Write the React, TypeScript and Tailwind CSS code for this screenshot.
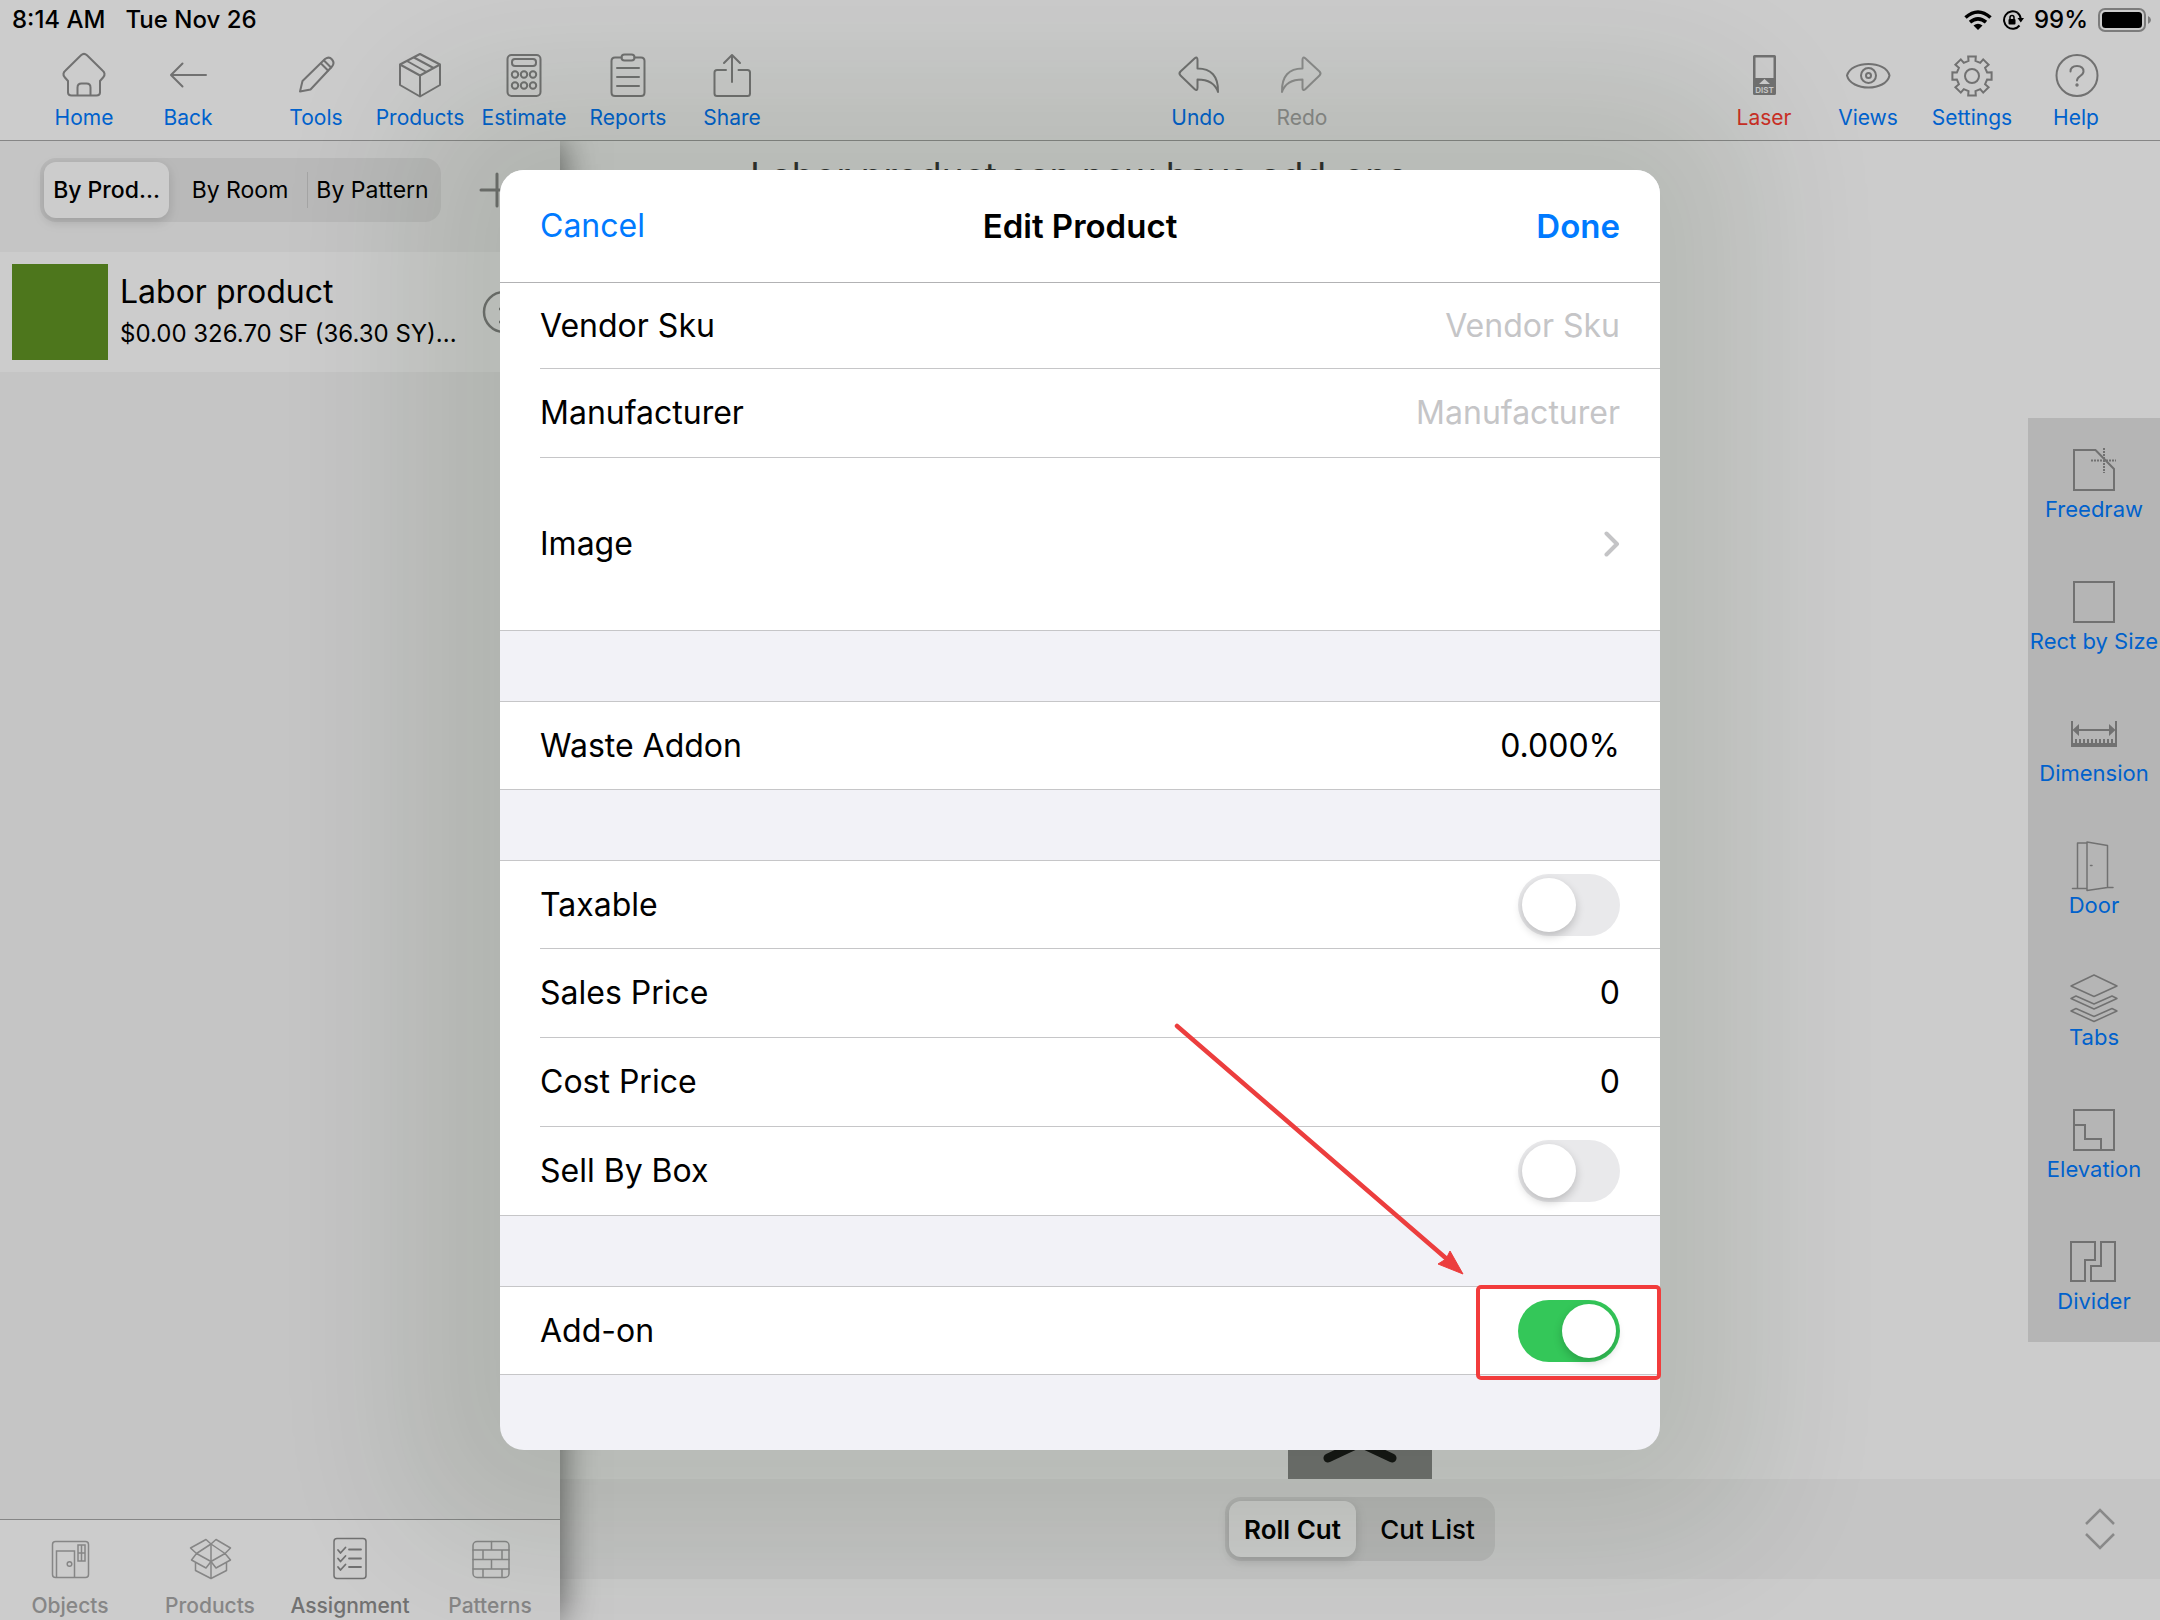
import type { ReactNode } from 'react'

// cog outline with eight square teeth, drawn around 24,24
const gearPath = (() => {
  const points: string[] = []
  for (let i = 0; i < 8; i++) {
    const steps: [number, number][] = [[15.5, -13], [20, -11], [20, 11], [15.5, 13]]
    steps.forEach(([r, offset]) => {
      const a = ((i * 45 + offset) * Math.PI) / 180
      points.push(`${(24 + r * Math.sin(a)).toFixed(1)} ${(24 - r * Math.cos(a)).toFixed(1)}`)
    })
  }
  return `M${points.join('L')}Z`
})()

function Icon({ children, className = '' }: { children: ReactNode; className?: string }) {
  return (
    <svg
      viewBox="0 0 48 48"
      className={`h-12 w-12 overflow-visible ${className}`}
      fill="none"
      stroke="currentColor"
      strokeWidth="2"
      strokeLinejoin="round"
      strokeLinecap="round"
      aria-hidden="true"
    >
      {children}
    </svg>
  )
}

const undoPath =
  'M20.5 6.5Q23.5 4 23.5 8V16.5C37 16.5 44.5 24 44 40C41 31 33 27.5 23.5 27.5V35.5Q23.5 39.5 20.5 37L6.5 23.5Q4.5 21.5 6.5 19.5Z'

const icons = {
  home: (
    <Icon>
      <path d="M21 3.2Q24 .6 27 3.2L42.5 18.5Q46 21.5 43.5 25L40 29V40.5Q40 43.5 36.5 43.5H11.5Q8 43.5 8 40.5V29L4.5 25Q2 21.5 5.5 18.5Z" />
      <path d="M17.5 43V35.5Q17.5 31.5 21.5 31.5H26.5Q30.5 31.5 30.5 35.5V43" />
    </Icon>
  ),
  back: (
    <Icon>
      <path d="M18.5 11.5L7 23l11.5 11.5M8 23H42" />
    </Icon>
  ),
  pencil: (
    <Icon>
      <path d="M8 39.5L10.5 29L33 7Q37 4 40 7.5Q43 11 40 14.5L18.5 37.5Z" />
      <path d="M32 8.5L39 15.5M29 11.5L36 18.5" />
    </Icon>
  ),
  box: (
    <Icon>
      <path d="M24 2L44 12.5V33L24 44.5L4 33V12.5ZM4 12.5L24 23.5L44 12.5M24 23.5V44.5M18 5.5L37.5 16M11 9L30.5 20" />
    </Icon>
  ),
  calculator: (
    <Icon>
      <rect x="7.5" y="3" width="33" height="41" rx="4" />
      <rect x="12" y="7" width="24" height="7" rx="3" />
      {[15, 24, 33].map((x) => (
        <g key={x}>
          <circle cx={x} cy="22.5" r="3.2" />
          <circle cx={x} cy="33.5" r="3.2" />
        </g>
      ))}
    </Icon>
  ),
  clipboard: (
    <Icon>
      <path d="M17.5 5.5H11Q7.5 5.5 7.5 9V40.5Q7.5 44 11 44H37Q40.5 44 40.5 40.5V9Q40.5 5.5 37 5.5H30.5" />
      <rect x="17.5" y="2.5" width="13" height="6" rx="3" />
      <path d="M13 16H35M13 25H35M13 34H35" />
    </Icon>
  ),
  share: (
    <Icon>
      <path d="M18 18H9Q6.5 18 6.5 20.5V41.5Q6.5 44 9 44H39.5Q42 44 42 41.5V20.5Q42 18 39.5 18H30.5M24 30V3M16 11L24 3L32 11" />
    </Icon>
  ),
  undo: (
    <Icon>
      <path d={undoPath} />
    </Icon>
  ),
  redo: (
    <Icon className="-scale-x-100">
      <path d={undoPath} />
    </Icon>
  ),
  laser: (
    <Icon>
      <path fill="currentColor" stroke="none" fillRule="evenodd" d="M14.5 3H34.5Q36 3 36 4.5V41.5Q36 43 34.5 43H14.5Q13 43 13 41.5V4.5Q13 3 14.5 3ZM15.5 5.5V26H33.5V5.5ZM24.5 27L19 32H30Z" />
      <text x="24.5" y="40.5" textAnchor="middle" stroke="none" className="fill-white text-[8px] font-semibold">DIST</text>
    </Icon>
  ),
  eye: (
    <Icon>
      <path d="M3 23.5C7 8 42 8 45.5 23.5C42 39.5 7 39.5 3 23.5Z" />
      <circle cx="24.5" cy="23.5" r="7.5" />
      <circle cx="24.5" cy="23.5" r="2.5" />
    </Icon>
  ),
  gear: (
    <Icon>
      <path d={gearPath} strokeLinejoin="miter" />
      <circle cx="24" cy="24" r="7" />
    </Icon>
  ),
  help: (
    <Icon>
      <circle cx="25" cy="23.5" r="20.5" />
      <path d="M18.5 19.5Q18.5 14 25 14T31.5 19.5C31.5 24 25 24 25 28.5" />
      <circle cx="25" cy="33" r=".7" fill="currentColor" />
    </Icon>
  ),
  freedraw: (
    <Icon>
      <path strokeLinejoin="miter" d="M4 4H25.5L44 23V44H4Z" />
      <path strokeLinecap="butt" strokeDasharray="2 1" d="M34 2V27M21 14.5H46" />
    </Icon>
  ),
  rect: (
    <Icon>
      <path strokeLinejoin="miter" d="M4 4H44V44H4Z" />
    </Icon>
  ),
  dimension: (
    <Icon>
      <path strokeLinecap="butt" d="M2 11V37M46 11V37M4 20H44" />
      <path strokeLinecap="butt" strokeWidth="4" d="M2 35H46" />
      <path strokeLinecap="butt" strokeWidth="4" strokeDasharray="2 2" d="M5 31H43" />
      <path fill="currentColor" stroke="none" d="M2.5 20L9 14V26ZM45.5 20L39 14V26Z" />
    </Icon>
  ),
  door: (
    <Icon>
      <path strokeWidth="1.5" d="M17 1H7.5V46M2.5 46.5H17M17 0L37.5 3.5V45.5L17 48.5ZM37.5 45.5H43M20.5 23.5H22" />
    </Icon>
  ),
  layers: (
    <Icon>
      <path strokeWidth="1.5" d="M24 1L47 12L24 22.5L1 12ZM6 22L1 24.5L24 35L47 24.5L42 22L24 30ZM6 34.5L1 37L24 47.5L47 37L42 34.5L24 42.5Z" />
    </Icon>
  ),
  elevation: (
    <Icon>
      <path strokeLinejoin="miter" d="M4 4H44V44H4ZM4 19H15V33H31V44" />
    </Icon>
  ),
  divider: (
    <Icon>
      <path strokeLinejoin="miter" d="M1 4H25V22H15V43H1ZM31 4H45V43H21V28H31Z" />
    </Icon>
  ),
  objects: (
    <Icon>
      <g strokeWidth="1.5">
        <rect x="6.5" y="5.5" width="36" height="36" rx="3" />
        <path strokeLinejoin="miter" d="M10.5 41V15H28.5V41M32 9H39V25H32ZM35.5 9V25M32 17H39" />
        <circle cx="23.5" cy="28" r="2.3" />
      </g>
    </Icon>
  ),
  openBox: (
    <Icon>
      <g strokeWidth="1.5">
        <path d="M25 8L20 3.5L4.5 12L10.5 17.5ZM25 8L30 3.5L44.5 12L39 17.5ZM10.5 17.5L5.5 24L20 32L25 25.5ZM39 17.5L44.5 24L30 32L25 25.5Z" />
        <path d="M25 8V42.5M9.5 27V34.5L25 42.5L40.5 34.5V27" />
      </g>
    </Icon>
  ),
  checklist: (
    <Icon>
      <rect x="8" y="2.5" width="32" height="40" rx="3" strokeWidth="1.5" />
      <path strokeWidth="1.8" d="M12 14L14.5 17L19.5 11.5M12 22.5L14.5 25.5L19.5 20M12 31L14.5 34L19.5 28.5M23 13.5H35M23 22.5H35M23 31H35" />
    </Icon>
  ),
  bricks: (
    <Icon>
      <g strokeWidth="1.5">
        <rect x="7" y="5.5" width="36" height="36" rx="4" />
        <path d="M7 14H43M7 23.5H43M7 33H43M25.5 5.5V14M17 14V23.5M36 14V23.5M25.5 23.5V33M17 33V41M36 33V41" />
      </g>
    </Icon>
  ),
}

type IconName = keyof typeof icons

function ToolButton({ icon, label, color = 'text-[#007aff]', iconColor = 'text-[#8e8e8e]' }: {
  icon: IconName
  label: string
  color?: string
  iconColor?: string
}) {
  return (
    <button className={`flex w-[104px] flex-col items-center gap-1 whitespace-nowrap ${color}`}>
      <span className={iconColor}>{icons[icon]}</span>
      <span className="text-[21px] leading-7">{label}</span>
    </button>
  )
}

function StatusBar() {
  return (
    <div className="flex h-10 items-center justify-between pr-2 pl-3 text-[24px] font-medium">
      <div className="flex gap-5">
        <span>8:14 AM</span>
        <span>Tue Nov 26</span>
      </div>
      <div className="flex items-center gap-[10px]">
        <svg viewBox="0 0 28 20" className="h-5 w-7" fill="none" stroke="#000" strokeWidth="3.6" aria-hidden="true">
          <path d="M1.5 7.5Q14 -3.5 26.5 7.5M6 12.2Q14 5.5 22 12.2" />
          <path d="M9.5 15.5Q14 12 18.5 15.5L14 20Z" fill="#000" stroke="none" />
        </svg>
        <svg viewBox="0 0 22 20" className="h-5 w-[22px]" fill="none" stroke="#000" strokeWidth="2" aria-hidden="true">
          <path d="M15.5 2.7A8.7 8.7 0 1 0 17.5 15.5M15.5 2.7A8.7 8.7 0 0 1 18.7 9" />
          <path d="M15.5 8H22L18.8 12.5Z" fill="#000" stroke="none" />
          <rect x="6.5" y="9" width="7" height="5.5" rx="1" fill="#000" stroke="none" />
          <path d="M8 9.5V7.5Q8 5.5 10 5.5T12 7.5V9.5" strokeWidth="1.5" />
        </svg>
        <span>99%</span>
        <svg viewBox="0 0 54 24" className="h-6 w-[54px]" aria-hidden="true">
          <rect x="1" y="1" width="46" height="22" rx="6" fill="none" stroke="#9c9c9c" strokeWidth="2" />
          <rect x="4" y="4" width="40" height="16" rx="3.5" />
          <path d="M50 8Q53 9.5 53 12T50 16Z" fill="#9c9c9c" />
        </svg>
      </div>
    </div>
  )
}

function Toolbar() {
  return (
    <nav className="flex items-start justify-between border-b border-[#a8a8a8] px-8 pt-3 pb-2">
      <div className="flex pr-1">
        <ToolButton icon="home" label="Home" />
        <ToolButton icon="back" label="Back" />
        <div className="w-6" />
        <ToolButton icon="pencil" label="Tools" />
        <ToolButton icon="box" label="Products" />
        <ToolButton icon="calculator" label="Estimate" />
        <ToolButton icon="clipboard" label="Reports" />
        <ToolButton icon="share" label="Share" />
      </div>
      <div className="flex">
        <ToolButton icon="undo" label="Undo" />
        <ToolButton icon="redo" label="Redo" color="text-[#adadad]" iconColor="text-[#b0b0b0]" />
      </div>
      <div className="flex">
        <ToolButton icon="laser" label="Laser" color="text-[#ff3b30]" />
        <ToolButton icon="eye" label="Views" />
        <ToolButton icon="gear" label="Settings" />
        <ToolButton icon="help" label="Help" />
      </div>
    </nav>
  )
}

function BottomTab({ icon, label, active = false }: { icon: IconName; label: string; active?: boolean }) {
  return (
    <button
      className={`flex w-[140px] flex-col items-center gap-2 pt-4 ${active ? 'text-[#8e8e8e]' : 'text-[#a8a8a8]'}`}
    >
      {icons[icon]}
      <span className="text-[21px] leading-7 font-medium">{label}</span>
    </button>
  )
}

function Sidebar() {
  return (
    <aside className="z-10 flex w-[560px] shrink-0 flex-col bg-[#f7f7f7] shadow-[0_0_36px_rgba(0,0,0,0.6)] [clip-path:inset(0_-60px_0_0)]">
      <div className="flex items-center gap-[38px] px-10 py-[17px]">
        <div className="flex h-16 w-[401px] items-center rounded-2xl bg-[#e8e8e8] p-1 text-[23px] whitespace-nowrap">
          <button className="h-14 w-[125px] rounded-xl bg-white font-medium shadow-[0_4px_12px_rgba(0,0,0,0.15)]">By Prod...</button>
          <button className="w-[138px] pl-1">By Room</button>
          <div className="h-9 w-px bg-[#cfcfcf]" />
          <button className="flex-1">By Pattern</button>
        </div>
        <button aria-label="Add">
          <svg viewBox="0 0 36 36" className="h-9 w-9 shrink-0" stroke="#8e8e8e" strokeWidth="3" strokeLinecap="round" aria-hidden="true">
            <path d="M2 18H34M18 2V34" />
          </svg>
        </button>
      </div>
      <div className="mt-[13px] flex h-[120px] items-center gap-3 bg-white pl-3">
        <div className="h-24 w-24 bg-[#619424]" />
        <div className="w-[350px] whitespace-nowrap">
          <div className="text-[32px] leading-[44px]">Labor product</div>
          <div className="text-[24px] leading-10">$0.00 326.70 SF (36.30 SY)...</div>
        </div>
        <button aria-label="Details">
          <svg viewBox="0 0 44 44" className="h-11 w-11" fill="none" stroke="#8e8e8e" strokeWidth="2.5" aria-hidden="true">
            <circle cx="22" cy="22" r="20" />
            <path d="M17 19H27M17 32H27" />
          </svg>
        </button>
      </div>
      <div className="flex-1" />
      <nav className="flex h-[101px] border-t border-[#a8a8a8] bg-white">
        <BottomTab icon="objects" label="Objects" />
        <BottomTab icon="openBox" label="Products" />
        <BottomTab icon="checklist" label="Assignment" active />
        <BottomTab icon="bricks" label="Patterns" />
      </nav>
    </aside>
  )
}

const drawTools: { icon: IconName; label: string }[] = [
  { icon: 'freedraw', label: 'Freedraw' },
  { icon: 'rect', label: 'Rect by Size' },
  { icon: 'dimension', label: 'Dimension' },
  { icon: 'door', label: 'Door' },
  { icon: 'layers', label: 'Tabs' },
  { icon: 'elevation', label: 'Elevation' },
  { icon: 'divider', label: 'Divider' },
]

function Workspace() {
  return (
    <main className="flex flex-1 flex-col">
      <div className="flex flex-1">
        <div className="flex flex-1 flex-col justify-between pl-[132px]">
          <h2 className="px-[58px] text-[37px] leading-[70px] text-[#3b3b3b]">Labor product can now have add-ons</h2>
          <button className="flex h-16 w-36 items-center justify-center self-center bg-[#8e8e8e]" aria-label="Expand">
            <svg viewBox="0 0 80 32" className="h-8 w-20" fill="none" stroke="#1a1a1a" strokeWidth="9" strokeLinecap="round" strokeLinejoin="round" aria-hidden="true">
              <path d="M8 27L40 12L72 27" />
            </svg>
          </button>
        </div>
        <div className="mt-[277px] flex w-[132px] flex-col self-start bg-[#e3e3e3]">
          {drawTools.map((tool) => (
            <button key={tool.label} className="flex h-[132px] flex-col items-center gap-px pt-7 whitespace-nowrap text-[#007aff]">
              <span className="text-[#8e8e8e]">{icons[tool.icon]}</span>
              <span className="text-[22px] leading-7">{tool.label}</span>
            </button>
          ))}
        </div>
      </div>
      <div className="mb-[41px] grid h-[100px] grid-cols-3 items-center bg-[#f7f7f7]">
        <div />
        <div className="flex h-16 w-[270px] items-center justify-self-center rounded-2xl bg-[#e4e4e4] p-1 text-[26px] font-medium whitespace-nowrap">
          <button className="h-14 w-[127px] rounded-xl bg-white font-semibold shadow-[0_4px_12px_rgba(0,0,0,0.15)]">Roll Cut</button>
          <button className="flex-1 pl-2">Cut List</button>
        </div>
        <button className="mr-[44px] justify-self-end" aria-label="Resize">
          <svg viewBox="0 0 32 44" className="h-11 w-8" fill="none" stroke="#acacac" strokeWidth="2.5" aria-hidden="true">
            <path d="M2 17L16 3L30 17M2 27L16 41L30 27" />
          </svg>
        </button>
      </div>
    </main>
  )
}

function Row({ label, htmlFor, children }: { label: string; htmlFor: string; children: ReactNode }) {
  return (
    <div className="relative flex h-[89px] items-center bg-white pl-10">
      <div className="flex h-full flex-1 items-center justify-between border-b border-[#c6c6c8] pr-10">
        <label htmlFor={htmlFor}>{label}</label>
        {children}
      </div>
    </div>
  )
}

function Toggle({ id, on = false }: { id: string; on?: boolean }) {
  return (
    <input
      id={id}
      type="checkbox"
      role="switch"
      defaultChecked={on}
      className="h-[62px] w-[102px] appearance-none rounded-full bg-[#e9e9eb] p-1 before:block before:h-[54px] before:w-[54px] before:rounded-full before:bg-white before:shadow-[0_4px_10px_rgba(0,0,0,0.2)] checked:bg-[#34c759] checked:before:translate-x-10"
    />
  )
}

function Section({ children }: { children: ReactNode }) {
  return <section className="mt-[70px] border-t border-[#c6c6c8] [&>div:first-child]:h-[88px] [&>div:last-child]:pl-0 [&>div:last-child>div]:pl-10">{children}</section>
}

const inputClass = 'w-[400px] bg-transparent text-right placeholder:text-[#c5c5c7] placeholder:opacity-100'

function EditProduct() {
  return (
    <form className="relative w-[1160px] rounded-[24px] bg-[#f2f2f7] pb-[75px] text-[32px] leading-10 shadow-[0_0_140px_90px_rgba(20,45,10,0.11)]">
      <header className="grid h-[113px] grid-cols-3 items-center rounded-t-[24px] border-b border-[#b2b2b4] bg-white px-10">
        <button type="button" className="justify-self-start text-[#007aff]">Cancel</button>
        <h1 className="text-center text-[33px] font-semibold">Edit Product</h1>
        <button type="button" className="justify-self-end text-[33px] font-semibold text-[#007aff]">Done</button>
      </header>
      <div className="[&>div:first-child]:h-[86px]">
        <Row label="Vendor Sku" htmlFor="vendor-sku">
          <input id="vendor-sku" className={inputClass} placeholder="Vendor Sku" />
        </Row>
        <Row label="Manufacturer" htmlFor="manufacturer">
          <input id="manufacturer" className={inputClass} placeholder="Manufacturer" />
        </Row>
        <button type="button" className="flex h-[173px] w-full items-center justify-between border-b border-[#c6c6c8] bg-white px-10">
          Image
          <svg viewBox="0 0 16 26" className="h-[26px] w-4" fill="none" stroke="#c4c4c6" strokeWidth="4" strokeLinecap="round" strokeLinejoin="round" aria-hidden="true">
            <path d="M2.5 2.5L13 13L2.5 23.5" />
          </svg>
        </button>
      </div>
      <Section>
        <Row label="Waste Addon" htmlFor="waste">
          <input id="waste" className={inputClass} defaultValue="0.000%" />
        </Row>
      </Section>
      <Section>
        <Row label="Taxable" htmlFor="taxable">
          <Toggle id="taxable" />
        </Row>
        <Row label="Sales Price" htmlFor="sales-price">
          <input id="sales-price" className={inputClass} defaultValue="0" />
        </Row>
        <Row label="Cost Price" htmlFor="cost-price">
          <input id="cost-price" className={inputClass} defaultValue="0" />
        </Row>
        <Row label="Sell By Box" htmlFor="sell-by-box">
          <Toggle id="sell-by-box" />
        </Row>
      </Section>
      <Section>
        <Row label="Add-on" htmlFor="add-on">
          <Toggle id="add-on" on />
          {/* highlight frame */}
          <div className="pointer-events-none absolute -top-[2px] -right-px h-[95px] w-[185px] rounded-[5px] border-4 border-[#f23c3c]" />
        </Row>
      </Section>
      {/* arrow to the switch */}
      <svg viewBox="0 0 290 252" className="pointer-events-none absolute top-[853px] left-[674px] h-[252px] w-[290px]" aria-hidden="true">
        <path d="M3 3L274 237" stroke="#ec3e3e" strokeWidth="4.5" strokeLinecap="round" />
        <path d="M289 251L264 241L272 236L276 228Z" fill="#ec3e3e" stroke="#ec3e3e" strokeLinejoin="round" />
      </svg>
    </form>
  )
}

export default function App() {
  return (
    <div className="relative flex min-h-screen flex-col overflow-hidden bg-white font-[Inter,'Liberation_Sans',sans-serif] text-black">
      <header>
        <StatusBar />
        <Toolbar />
      </header>
      <div className="flex flex-1">
        <Sidebar />
        <Workspace />
      </div>
      {/* dimmed backdrop with the sheet on top */}
      <div className="absolute inset-0 z-20 flex items-center justify-center bg-black/20">
        <EditProduct />
      </div>
    </div>
  )
}
